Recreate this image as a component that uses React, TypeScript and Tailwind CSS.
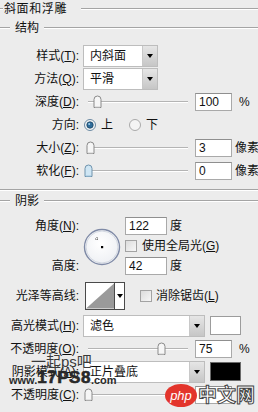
import type { ReactNode } from 'react';

const font = "font-['Liberation_Sans','Noto_Sans_CJK_SC',sans-serif]";

function Rule({ className = '' }: { className?: string }) {
  return <div className={`h-[2px] border-t border-[#a4a4a4] border-b border-b-white ${className}`} />;
}

function Label({ children }: { children: ReactNode }) {
  return <div className="w-[80px] shrink-0 whitespace-nowrap pr-[1px] text-right">{children}</div>;
}

function Key({ k }: { k: string }) {
  return <span className="underline underline-offset-[1px]">{k}</span>;
}

function Arrow() {
  return <div className="h-0 w-0 border-x-[3.5px] border-t-[4px] border-x-transparent border-t-black" />;
}

function Select({ value, wide }: { value: string; wide?: boolean }) {
  return (
    <div className={`ml-[3px] flex h-[22px] shrink-0 border border-[#bdbdbd] bg-white ${wide ? 'w-[122px]' : 'w-[75px]'}`}>
      <div className="flex-1 whitespace-nowrap pl-[6px] leading-[20px]">{value}</div>
      <div className="flex w-[15px] items-center justify-center border-l border-[#c8c8c8] bg-gradient-to-b from-[#e6e6e6] to-[#c6c6c6]">
        <Arrow />
      </div>
    </div>
  );
}

function Thumb({ active }: { active?: boolean }) {
  return (
    <svg width="9" height="14" viewBox="0 0 9 14">
      <path
        d="M1 4.5 Q1 1 4.5 1 Q8 1 8 4.5 V12.5 H1 Z"
        fill={active ? '#cfe6f4' : '#f6f6f6'}
        stroke={active ? '#6f93ad' : '#8a8a8a'}
      />
      <line x1="2" y1="12" x2="7" y2="12" stroke={active ? '#9cc3dc' : '#cfcfcf'} />
    </svg>
  );
}

function Slider({ at, active }: { at: number; active?: boolean }) {
  return (
    <div className="relative ml-[8px] h-[14px] w-[100px] shrink-0">
      <div className="absolute left-0 right-0 top-[6px] h-[2px] border-t border-[#b4b4b4] border-b border-b-white" />
      <div className="absolute top-0" style={{ left: at }}>
        <Thumb active={active} />
      </div>
    </div>
  );
}

function Field({ value, narrow }: { value: string; narrow?: boolean }) {
  return (
    <div
      className={`h-[18px] shrink-0 border border-[#a9a9a9] border-t-[#8f8f8f] bg-white pl-[3px] leading-[16px] ${
        narrow ? 'w-[37px]' : 'w-[42px]'
      }`}
    >
      {value}
    </div>
  );
}

function Radio({ on }: { on?: boolean }) {
  return (
    <svg width="12" height="12" viewBox="0 0 12 12">
      <circle cx="6" cy="6" r="5.5" fill="#f4f4f4" stroke={on ? '#6c8aa3' : '#a9a9a9'} />
      {on && <circle cx="6" cy="6" r="3.2" fill="#2f6c9a" stroke="#1c4563" strokeWidth="0.8" />}
      {on && <circle cx="5.2" cy="5" r="1" fill="#9fd0f0" />}
    </svg>
  );
}

function Check() {
  return <div className="h-[12px] w-[12px] shrink-0 border border-[#a3a3a3] bg-gradient-to-br from-[#dcdcdc] to-[#f7f7f7]" />;
}

function SliderRow({ label, at, active, value, unit }: { label: ReactNode; at: number; active?: boolean; value: string; unit: string }) {
  return (
    <div className="flex h-[23px] items-center whitespace-nowrap">
      <Label>{label}</Label>
      <Slider at={at} active={active} />
      <div className="ml-[7px] shrink-0">
        <Field value={value} narrow />
      </div>
      <span className={`shrink-0 ${unit === '%' ? 'ml-[7px]' : 'ml-[3px]'}`}>{unit}</span>
    </div>
  );
}

function Group({ title }: { title: string }) {
  return (
    <div className="flex h-[20px] items-center">
      <Rule className="w-[10px]" />
      <span className="px-[5px] leading-none">{title}</span>
      <Rule className="flex-1" />
    </div>
  );
}

export default function App() {
  return (
    <div className={`relative h-[412px] w-[258px] overflow-hidden bg-[#ececec] text-[12px] text-[#111] ${font}`}>
      <div className="flex h-[18px] items-center">
        <Rule className="w-[3px]" />
        <span className="ml-[1px] tracking-[0.6px]">斜面和浮雕</span>
        <Rule className="ml-[14px] flex-1" />
      </div>
      <Group title="结构" />

      <div className="mt-[6px] flex h-[23px] items-center">
        <Label>
          样式(<Key k="T" />):
        </Label>
        <Select value="内斜面" />
      </div>
      <div className="flex h-[23px] items-center">
        <Label>
          方法(<Key k="Q" />):
        </Label>
        <Select value="平滑" />
      </div>
      <SliderRow label={<>深度(<Key k="D" />):</>} at={5} value="100" unit="%" />
      <div className="flex h-[23px] items-center">
        <Label>方向:</Label>
        <div className="ml-[4px] flex items-center">
          <Radio on />
        </div>
        <span className="ml-[5px]">上</span>
        <div className="ml-[16px] flex items-center">
          <Radio />
        </div>
        <span className="ml-[5px]">下</span>
      </div>
      <SliderRow label={<>大小(<Key k="Z" />):</>} at={-2} value="3" unit="像素" />
      <SliderRow label={<>软化(<Key k="F" />):</>} at={-4} active value="0" unit="像素" />

      <Rule className="mt-[7px]" />
      <Group title="阴影" />

      <div className="flex h-[67px] pt-[5px]">
        <div className="flex w-[80px] flex-col justify-between pb-[2px] pr-[1px] text-right">
          <div className="leading-[20px]">
            角度(<Key k="N" />):
          </div>
          <div className="leading-[20px]">高度:</div>
        </div>
        <div className="flex w-[45px] items-center pl-[3px]">
          <svg width="38" height="38" viewBox="0 0 38 38">
            <defs>
              <radialGradient id="dial" cx="0.45" cy="0.4" r="0.6">
                <stop offset="0" stopColor="#ffffff" />
                <stop offset="1" stopColor="#eef0f4" />
              </radialGradient>
            </defs>
            <circle cx="19" cy="19" r="17.5" fill="url(#dial)" stroke="#7f8aa6" strokeWidth="1.4" />
            <circle cx="19" cy="19" r="16" fill="none" stroke="#c9cfdb" strokeWidth="0.8" />
            <path d="M14 9 V13 M12 11 H16" stroke="#333" strokeWidth="0.8" strokeDasharray="1 1" />
            <rect x="18" y="18" width="2.2" height="2.2" fill="#000" />
          </svg>
        </div>
        <div className="flex flex-col whitespace-nowrap">
          <div className="flex h-[20px] items-center">
            <Field value="122" />
            <span className="ml-[3px]">度</span>
          </div>
          <div className="flex h-[20px] items-center">
            <Check />
            <span className="ml-[5px]">
              使用全局光(<Key k="G" />)
            </span>
          </div>
          <div className="flex h-[20px] items-center">
            <Field value="42" />
            <span className="ml-[3px]">度</span>
          </div>
        </div>
      </div>

      <div className="flex h-[36px] items-center whitespace-nowrap">
        <Label>光泽等高线:</Label>
        <div className="ml-[5px] flex h-[28px] w-[40px] shrink-0 border border-[#4a4a4a] bg-white">
          <svg width="29" height="26" viewBox="0 0 29 26" className="border-r border-[#4a4a4a]">
            <polygon points="0,26 29,0 29,26" fill="#9a9a9a" />
          </svg>
          <div className="flex flex-1 items-center justify-center">
            <Arrow />
          </div>
        </div>
        <div className="ml-[15px] flex items-center">
          <Check />
          <span className="ml-[4px]">
            消除锯齿(<Key k="L" />)
          </span>
        </div>
      </div>

      <div className="flex h-[23px] items-center">
        <Label>
          高光模式(<Key k="H" />):
        </Label>
        <Select value="滤色" wide />
        <div className="ml-[5px] h-[19px] w-[31px] shrink-0 border border-[#9c9c9c] bg-white" />
      </div>
      <SliderRow label={<>不透明度(<Key k="O" />):</>} at={69} value="75" unit="%" />
      <div className="flex h-[23px] items-center">
        <Label>
          阴影模式(<Key k="A" />):
        </Label>
        <Select value="正片叠底" wide />
        <div className="ml-[5px] h-[19px] w-[31px] shrink-0 border border-[#6a6a6a] bg-black" />
      </div>
      <SliderRow label={<>不透明度(<Key k="C" />):</>} at={-4} value="0" unit="%" />

      <div className="absolute left-[31px] top-[354px] text-[15px] leading-none text-[#3a3a3a]">一起ps吧</div>
      <div className="absolute left-[9px] top-[369px] flex items-end leading-none text-[#2b2b2b]">
        <span className="text-[11px] font-bold">www.</span>
        <span className="text-[17px] font-black tracking-[0.5px] [-webkit-text-stroke:0.6px_#222]">17PS8</span>
        <span className="text-[11px] font-bold">.com</span>
      </div>
      <div className="absolute left-[165px] top-[384px] flex items-center">
        <div className="flex h-[23px] w-[32px] items-center justify-center rounded-[50%] bg-[#e3352c] text-[13px] italic leading-none text-white">
          php
        </div>
        <span className="ml-[1px] text-[19px] font-bold leading-none text-white [-webkit-text-stroke:1px_#444]">中文网</span>
      </div>
    </div>
  );
}
